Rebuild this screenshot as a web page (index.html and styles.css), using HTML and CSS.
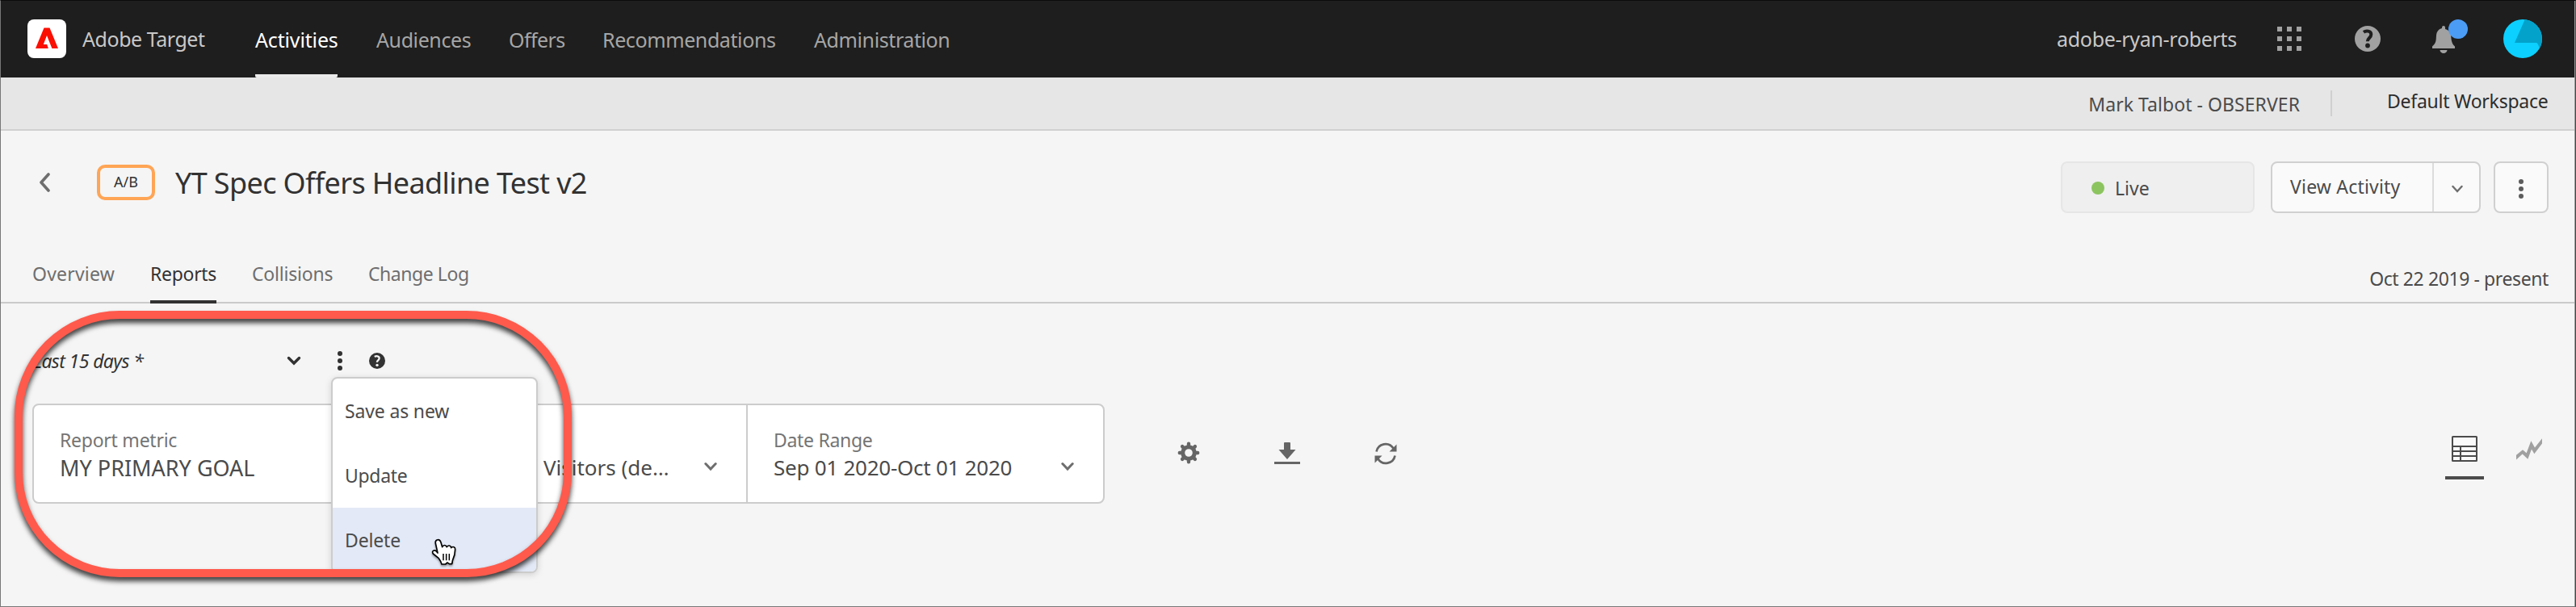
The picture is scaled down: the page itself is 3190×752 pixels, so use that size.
FILE: index.html
```html
<!DOCTYPE html>
<html lang="en">
<head>
<meta charset="utf-8">
<title>Adobe Target</title>
<link rel="stylesheet" href="styles.css">
</head>
<body>
<header class="topbar">
  <svg class="logo" width="48" height="48" viewBox="0 0 48 48"><rect width="48" height="48" rx="8" fill="#fff"/><path d="M20.500 10.500h7L38 36H10z" fill="#fa0f00"/><path d="M24 20l6.600 16.500h-4.600l-1.800-5.500h-4.400z" fill="#fff"/></svg>
  <span class="product">Adobe Target</span>
  <nav class="nav">
    <a class="nav-item nav-activities active">Activities</a>
    <a class="nav-item nav-audiences">Audiences</a>
    <a class="nav-item nav-offers">Offers</a>
    <a class="nav-item nav-recs">Recommendations</a>
    <a class="nav-item nav-admin">Administration</a>
  </nav>
  <span class="org">adobe-ryan-roberts</span>
  <div class="top-icons">
    <svg width="30" height="30" viewBox="0 0 30 30" fill="#a1a1a1"><path d="M0 0h6v6H0zM12 0h6v6h-6zM24 0h6v6h-6zM0 12h6v6H0zM12 12h6v6h-6zM24 12h6v6h-6zM0 24h6v6H0zM12 24h6v6h-6zM24 24h6v6h-6z"/></svg>
    <svg class="help" width="32" height="32" viewBox="0 0 32 32"><circle cx="16" cy="16" r="16" fill="#a1a1a1"/><path d="M11 7.800c3-2.200 9.300-1.800 9.300 2.900 0 4-4.500 4.600-4.500 8.600" fill="none" stroke="#1e1e1e" stroke-width="4"/><circle cx="16" cy="24.500" r="2.900" fill="#1e1e1e"/></svg>
    <div class="bell">
      <svg width="28" height="34" viewBox="0 0 28 34" fill="#a1a1a1"><path d="M12 3V2a2 2 0 0 1 4 0v2C19 4.500 21 6.500 22.500 9c1.500 5 0 12 5.500 16.500V28H0v-2.500C5.500 21 4.500 17 5 12c.4-5 3-8.200 7-9zM9.500 30h9a4.500 4 0 0 1-9 0z"/></svg>
      <span class="badge-dot"></span>
    </div>
    <svg class="avatar" width="48" height="48" viewBox="0 0 48 48"><circle cx="24" cy="24" r="24" fill="#0cd0ff"/><path d="M26.700 .2L14 29h27c1.500 0 2.500 3.500 4 6.400A24 24 0 0 0 26.700 .2z" fill="#02a2cb"/></svg>
  </div>
</header>

<div class="subbar">
  <span class="user">Mark Talbot - OBSERVER</span>
  <span class="divider"></span>
  <span class="workspace">Default Workspace</span>
</div>

<section class="title-row">
  <svg class="back" width="14" height="24" viewBox="0 0 14 24"><path d="M12 2L3 12l9 10" fill="none" stroke="#6e6e6e" stroke-width="3.600" stroke-linecap="round" stroke-linejoin="round"/></svg>
  <span class="type-badge">A/B</span>
  <h1 class="title">YT Spec Offers Headline Test v2</h1>
  <div class="actions">
    <div class="status"><span class="status-dot"></span>Live</div>
    <div class="split"><span class="split-label">View Activity</span><span class="split-arrow"><svg width="14" height="10" viewBox="0 0 14 10"><path d="M1.500 2L7 8l5.500-6" fill="none" stroke="#6e6e6e" stroke-width="2.400" stroke-linecap="round"/></svg></span></div>
    <div class="more"><svg width="6" height="24" viewBox="0 0 6 24" fill="#5c5c5c"><circle cx="3" cy="3" r="3"/><circle cx="3" cy="12" r="3"/><circle cx="3" cy="21" r="3"/></svg></div>
  </div>
</section>

<div class="tabs">
  <a class="tab tab-overview">Overview</a>
  <a class="tab tab-reports selected">Reports</a>
  <a class="tab tab-collisions">Collisions</a>
  <a class="tab tab-log">Change Log</a>
  <span class="dates">Oct 22 2019 - present</span>
</div>

<div class="preset-row">
  <span class="preset">Last 15 days *</span>
  <svg class="preset-arrow" width="18" height="12" viewBox="0 0 18 12"><path d="M2.500 2.500L9 9l6.500-6.500" fill="none" stroke="#323232" stroke-width="3.400" stroke-linecap="round"/></svg>
  <div class="preset-more">
    <svg width="6" height="24" viewBox="0 0 6 24" fill="#323232"><circle cx="3" cy="3" r="3"/><circle cx="3" cy="12" r="3"/><circle cx="3" cy="21" r="3"/></svg>
    <ul class="menu">
      <li class="menu-item">Save as new</li>
      <li class="menu-item item-update">Update</li>
      <li class="menu-item hovered">Delete</li>
    </ul>
  </div>
  <svg class="preset-help" width="20" height="20" viewBox="0 0 32 32"><circle cx="16" cy="16" r="16" fill="#323232"/><path d="M11 8c3-2.200 9.300-1.800 9.300 2.900 0 4-4.500 4.200-4.500 8" fill="none" stroke="#f5f5f5" stroke-width="3.600"/><circle cx="16" cy="24.500" r="2.700" fill="#f5f5f5"/></svg>
</div>

<div class="report-row">
  <div class="filters">
    <div class="filter"><div class="filter-label">Report metric</div><div class="filter-value goal">MY PRIMARY GOAL</div></div>
    <div class="filter visitors">
      <div class="filter-value">Visitors (de…</div>
      <svg class="arrow" width="16" height="12" viewBox="0 0 16 12"><path d="M1.800 2.500L8 9l6.200-6.500" fill="none" stroke="#6e6e6e" stroke-width="3" stroke-linecap="round"/></svg>
    </div>
    <div class="filter range">
      <div><div class="filter-label range-label">Date Range</div><div class="filter-value range-value">Sep 01 2020-Oct 01 2020</div></div>
      <svg class="arrow" width="16" height="12" viewBox="0 0 16 12"><path d="M1.800 2.500L8 9l6.200-6.500" fill="none" stroke="#6e6e6e" stroke-width="3" stroke-linecap="round"/></svg>
    </div>
  </div>
  <div class="tools">
    <svg class="gear" width="28" height="28" viewBox="-14 -14 28 28"><circle r="7.300" fill="none" stroke="#656565" stroke-width="5"/><g stroke="#656565" stroke-width="4.400" stroke-linecap="round"><path d="M0-9v-2.200M0 9v2.200M9 0h2.200M-9 0h-2.200M6.400 6.400l1.500 1.500M-6.400 6.400l-1.500 1.500M6.400-6.400l1.500-1.500M-6.400-6.400l-1.500-1.500"/></g></svg>
    <svg width="32" height="28" viewBox="0 0 32 28" fill="#656565"><path d="M13 0h6a1 1 0 0 1 1 1v8h6.500L16 21 5.500 9H12V1a1 1 0 0 1 1-1zM0 24h32v3H0z"/></svg>
    <svg width="28" height="28" viewBox="0 0 28 28"><path d="M2.500 11.500A11.500 11.500 0 0 1 23.500 7.500M25.500 16.500A11.500 11.500 0 0 1 4.500 20.500" fill="none" stroke="#656565" stroke-width="2.700"/><path d="M27.500 2.500v9H18.500zM.5 25.500v-9h9z" fill="#656565"/></svg>
  </div>
  <div class="views">
    <div class="view-table"><svg width="32" height="32" viewBox="0 0 32 32"><rect x="1" y="1" width="30" height="30" rx=".5" fill="#fafafa" stroke="#4b4b4b" stroke-width="2"/><path d="M1 13h30M1 19h30M1 25h30M11 13v18" stroke="#4b4b4b" stroke-width="2"/></svg></div>
    <svg class="view-chart" width="32" height="27" viewBox="648 191 96 80"><path d="M648 253l24-20 14 12 17-45 14 25 27-34v19l-29 38-10-17-14 37-20-19-23 21z" fill="#a0a0a0"/></svg>
  </div>
</div>

<svg class="cursor" width="34" height="38" viewBox="0 0 102 114"><path d="M24 9c9-4 13 3 15 9l5 17c4-9 14-8 17 0 5-8 15-6 16 3 7-7 16-2 15 6-1 22-3 26-8 36-3 7-2 10-4 18H70l-7-5-7 6H42c-2-9-7-16-12-23L10 60C3 51 14 43 22 51l5 6L19 21c-1-5 1-10 5-12z" fill="#fff" stroke="#000" stroke-width="5" stroke-linejoin="round"/><path d="M48 60v25M59 60v25M70 60v25" stroke="#000" stroke-width="4.500"/></svg>
<div class="callout"></div>
<div class="frame"></div>
</body>
</html>
```
FILE: styles.css
```css
* { box-sizing: border-box; }
body {
  position: relative;
  margin: 0;
  width: 3190px;
  height: 752px;
  overflow: hidden;
  background: #f5f5f5;
  color: #4b4b4b;
  font: 23px "Noto Sans", "Open Sans", sans-serif;
  white-space: nowrap;
}
svg { display: block; flex: none; }

/* Global header */
.topbar {
  display: flex;
  align-items: center;
  height: 96px;
  padding: 0 42px 0 34px;
  background: #1e1e1e;
  color: #a6a6a6;
  font-size: 25px;
}
.product { width: 214px; margin-left: 20px; color: #c8c8c8; letter-spacing: -.45px; }
.nav { display: flex; height: 96px; line-height: 98px; letter-spacing: -.4px; }
.nav-item { height: 96px; }
.nav-activities { width: 102px; margin-right: 48px; letter-spacing: -.15px; }
.nav-audiences { width: 164px; }
.nav-offers { width: 116px; letter-spacing: -.6px; }
.nav-recs { width: 262px; }
.nav-admin { width: 170px; }
.nav-item.active { color: #fff; border-bottom: 4px solid #eaeaea; border-radius: 2px; }
.org { width: 225px; margin-left: auto; color: #c8c8c8; letter-spacing: -.3px; }
.top-icons { display: flex; align-items: center; margin-left: 48px; }
.help { margin-left: 66px; }
.bell { position: relative; width: 28px; margin: 2px 0 0 64px; }
.badge-dot { position: absolute; left: 20px; top: -8px; width: 24px; height: 24px; border-radius: 50%; background: #4b9cf5; }
.avatar { margin-left: 60px; }

/* Workspace strip */
.subbar {
  display: flex;
  justify-content: flex-end;
  height: 66px;
  padding-right: 34px;
  border-bottom: 2px solid #d0d0d0;
  background: #e6e6e6;
}
.user { margin-right: 38px; line-height: 67px; letter-spacing: .05px; }
.divider { width: 2px; height: 32px; margin-top: 16px; background: #d0d0d0; }
.workspace { width: 200px; margin-left: 68px; line-height: 59px; color: #2c2c2c; letter-spacing: -.25px; }

/* Activity title */
.title-row { display: flex; align-items: center; height: 128px; padding: 0 34px 0 48px; }
.type-badge {
  width: 72px;
  height: 44px;
  margin-left: 58px;
  border: 4px solid #ffa555;
  border-radius: 10px;
  color: #323232;
  font-size: 18px;
  line-height: 34px;
  text-align: center;
}
.title { margin: 0 0 0 25px; color: #323232; font-size: 36px; font-weight: 400; letter-spacing: -.63px; }
.actions { display: flex; height: 64px; margin: 12px 0 0 auto; }
.status {
  display: flex;
  align-items: center;
  width: 240px;
  padding: 2px 0 0 36px;
  border: 2px solid #e6e6e6;
  border-radius: 8px;
  background: #efefef;
}
.status-dot { width: 16px; height: 16px; margin-right: 13px; border-radius: 50%; background: #8cc45f; }
.split { display: flex; width: 260px; margin-left: 20px; border: 2px solid #d0d0d0; border-radius: 8px; background: #fafafa; line-height: 58px; }
.split-label { width: 200px; padding-left: 22px; border-right: 2px solid #dcdcdc; letter-spacing: .2px; }
.split-arrow { display: flex; align-items: center; padding: 3px 0 0 22px; }
.more { display: flex; align-items: center; justify-content: center; width: 68px; margin-left: 16px; padding-top: 4px; border: 2px solid #d0d0d0; border-radius: 8px; background: #fafafa; }

/* Tabs */
.tabs { display: flex; height: 86px; padding: 0 34px 0 40px; border-bottom: 2px solid #cacaca; line-height: 98px; color: #6e6e6e; }
.tab { height: 86px; }
.tab-overview { width: 146px; letter-spacing: .2px; }
.tab-reports { width: 82px; margin-right: 44px; letter-spacing: -.3px; }
.tab-collisions { width: 144px; letter-spacing: -.2px; }
.tab-log { letter-spacing: -.45px; }
.selected { border-bottom: 4px solid #323232; color: #323232; }
.dates { margin-left: auto; line-height: 111px; color: #4b4b4b; letter-spacing: -.4px; }

/* Report preset */
.preset-row { display: flex; align-items: center; height: 124px; padding-left: 41px; }
.preset-row > * { margin-top: 18px; }
.preset { width: 314px; color: #323232; font-style: italic; letter-spacing: -.6px; }
.preset-more { position: relative; z-index: 1; margin-left: 45px; }
.preset-help { margin-left: 33px; }
.menu {
  position: absolute;
  left: -8px;
  top: 32px;
  width: 256px;
  height: 243px;
  margin: 0;
  padding: 0;
  overflow: hidden;
  list-style: none;
  border: 2px solid #ccc;
  border-radius: 8px;
  background: #fff;
  box-shadow: 0 2px 8px rgba(0, 0, 0, .15);
}
.menu-item { height: 80px; padding-left: 15px; line-height: 81px; letter-spacing: -.15px; }
.item-update { letter-spacing: -.3px; }
.hovered { background: #e3e9f6; }

/* Filters and tools */
.report-row { display: flex; align-items: center; height: 124px; padding: 0 42px 0 40px; }
.filters { display: flex; width: 1328px; height: 124px; border: 2px solid #ccc; border-radius: 8px; background: #fff; }
.filter { display: flex; flex-direction: column; width: 440px; padding: 26px 0 0 32px; line-height: 34px; }
.filter-label { color: #747474; letter-spacing: -.25px; }
.filter-value { font-size: 26px; line-height: 35px; }
.goal { font-size: 27px; }
.visitors, .range { flex-direction: row; justify-content: space-between; }
.visitors { width: 444px; padding: 60px 36px 0 191px; border-right: 2px solid #ccc; }
.visitors .arrow { margin-top: 10px; }
.range { padding: 26px 36px 0 32px; }
.range .arrow { margin-top: 44px; }
.range-label { letter-spacing: -.3px; }
.range-value { letter-spacing: -.25px; }
.tools { display: flex; align-items: center; gap: 92px; margin-left: 90px; }
.gear { margin-top: -3px; }
.views { display: flex; margin-left: auto; }
.view-table { width: 48px; height: 54px; margin-top: 10px; padding-left: 8px; border-bottom: 4px solid #4b4b4b; }
.view-chart { margin: 13px 0 0 40px; }

/* Overlays */
.cursor { position: absolute; left: 533px; top: 666px; z-index: 2; filter: drop-shadow(0 2px 1px rgba(0, 0, 0, .35)); }
.callout {
  position: absolute;
  left: 18px;
  top: 385px;
  z-index: 3;
  width: 690px;
  height: 330px;
  border: 10px solid #ff5a4c;
  border-radius: 130px;
  filter: drop-shadow(0 5px 3px rgba(0, 0, 0, .75));
}
.frame {
  position: absolute;
  inset: 0;
  z-index: 4;
  border: 1px solid #777;
  border-top-color: #0c0c0c;
  border-right-color: #484848;
  box-shadow: inset -1px 0 #999;
}
```
